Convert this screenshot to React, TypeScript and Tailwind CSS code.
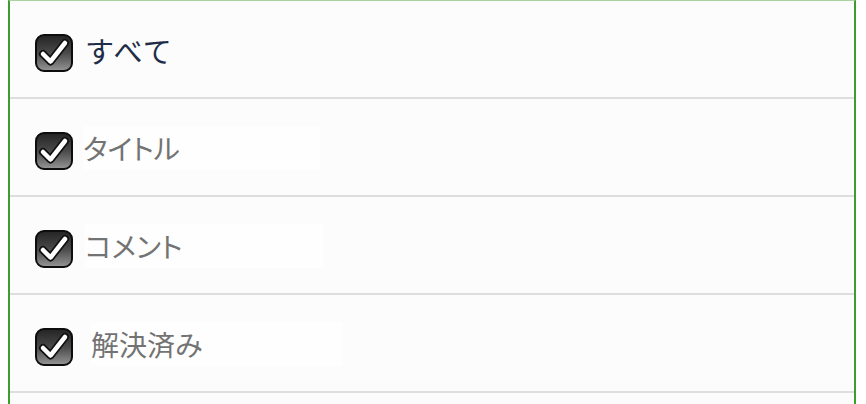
import React from 'react'

const items = [
  { label: 'すべて', main: true, cls: 'ml-[12px] text-[29px] tracking-[1.5px] text-[#1f2d48]' },
  { label: 'タイトル', main: false, cls: 'ml-[10px] text-[28px] [font-feature-settings:"palt"] text-[#737373]' },
  { label: 'コメント', main: false, cls: 'ml-[12px] text-[28px] [font-feature-settings:"palt"] text-[#737373]' },
  { label: '解決済み', main: false, cls: 'ml-[18px] text-[28px] text-[#737373]' },
]

function CheckIcon() {
  return (
    <div className="w-[38px] h-[38px] shrink-0 rounded-[9px] border-2 border-[#0d0d0d] bg-gradient-to-b from-[#262626] via-[#4a4a4a] to-[#929292] flex items-center justify-center">
      <svg width="32" height="30" viewBox="0 0 32 30">
        <path
          d="M5 16 L12.5 23.5 L27 5"
          fill="none"
          stroke="#111"
          strokeWidth="8"
          strokeLinecap="round"
          strokeLinejoin="round"
        />
        <path
          d="M5 16 L12.5 23.5 L27 5"
          fill="none"
          stroke="#ffffff"
          strokeWidth="4.5"
          strokeLinecap="round"
          strokeLinejoin="round"
        />
      </svg>
    </div>
  )
}

export default function App() {
  return (
    <div
      className="w-[866px] h-[404px] bg-white overflow-hidden"
      style={{ fontFamily: '"Noto Sans CJK JP", "Noto Sans", sans-serif' }}
    >
      <div className="ml-[8px] w-[848px] h-full border-l-2 border-r-2 border-t border-l-[#3f9c30] border-r-[#3f9c30] border-t-[#a9d29c] bg-[#fcfcfc]">
        {items.map((item) => (
          <div
            key={item.label}
            className="h-[98px] border-b-2 border-[#dedede] flex items-start pl-[25px] pt-[33px]"
          >
            <CheckIcon />
            <span
              className={`${item.cls} -mt-[6px] leading-[44px] ${item.main ? '' : 'bg-[#fefefe] pr-[140px]'}`}
            >
              {item.label}
            </span>
          </div>
        ))}
      </div>
    </div>
  )
}
